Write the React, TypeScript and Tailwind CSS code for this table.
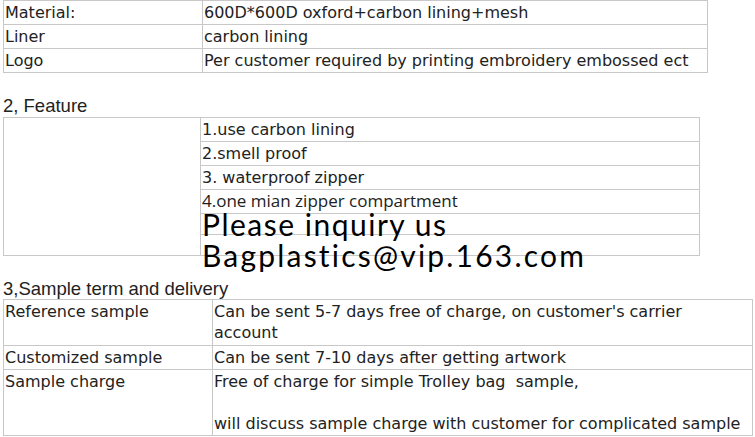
import React from "react";

const verdana = "font-['DejaVu_Sans',Verdana,sans-serif]";

export default function App() {
  const specRows = [
    ["Material:", "600D*600D oxford+carbon lining+mesh"],
    ["Liner", "carbon lining"],
    ["Logo", "Per customer required by printing embroidery embossed ect"],
  ];
  const features = ["1.use carbon lining", "2.smell proof", "3. waterproof zipper"];

  return (
    <div className="w-[755px] h-[437px] overflow-hidden bg-white text-[#222]">
      {/* 1, spec table */}
      <div
        className={`ml-[3px] grid w-[705px] grid-cols-[199px_505px] border-l border-t border-[#c8c8c8] text-[16px] ${verdana}`}
      >
        {specRows.map(([k, v]) => (
          <React.Fragment key={k}>
            <div className="h-[24px] border-b border-r border-[#c8c8c8] pl-[1px] leading-[23px] whitespace-nowrap">
              {k}
            </div>
            <div className="h-[24px] border-b border-r border-[#c8c8c8] pl-[1px] leading-[23px] whitespace-nowrap">
              {v}
            </div>
          </React.Fragment>
        ))}
      </div>

      <div className="h-[44px] pt-[23px] pl-[3px] font-['Liberation_Sans',Arial,sans-serif] text-[18.5px] leading-[20px]">
        2, Feature
      </div>

      {/* 2, feature table */}
      <div
        className={`ml-[3px] grid w-[697px] grid-cols-[197px_499px] grid-rows-[24px_24px_24px_24px_21px_21px] border-l border-t border-[#c8c8c8] text-[16px] ${verdana}`}
      >
        <div className="row-span-6 border-b border-r border-[#c8c8c8]" />
        {features.map((f) => (
          <div
            key={f}
            className="border-b border-r border-[#c8c8c8] pl-[1px] leading-[23px] whitespace-nowrap"
          >
            {f}
          </div>
        ))}
        <div className="border-b border-r border-[#c8c8c8] pl-[1px] font-['Open_Sans',sans-serif] text-[17px] leading-[22px] whitespace-nowrap">
          4.one mian zipper compartment
        </div>
        <div className="relative z-10 h-[21px] overflow-visible border-b border-r border-[#c8c8c8] pl-[1px] font-['Lato',sans-serif] text-[30px] leading-[31px] text-black whitespace-nowrap">
          <div className="-mt-[5px]">
            <span className="tracking-[1.5px]">Please inquiry us</span>
            <br />
            <span className="tracking-[2.2px]">Bagplastics@vip.163.com</span>
          </div>
        </div>
        <div className="border-b border-r border-[#c8c8c8]" />
      </div>

      <div className="h-[43px] pt-[23px] pl-[3px] font-['Liberation_Sans',Arial,sans-serif] text-[18.5px] leading-[20px]">
        3,Sample term and delivery
      </div>

      {/* 3, sample table */}
      <div
        className={`ml-[3px] grid w-[750px] grid-cols-[209px_540px] grid-rows-[46px_24px_66px] border-l border-t border-[#c8c8c8] text-[16px] leading-[21px] ${verdana}`}
      >
        <div className="border-b border-r border-[#c8c8c8] pl-[1px] pt-[1px] whitespace-nowrap">
          Reference sample
        </div>
        <div className="border-b border-r border-[#c8c8c8] pl-[1px] pt-[1px] whitespace-nowrap">
          Can be sent 5-7 days free of charge, on customer's carrier
          <br />
          account
        </div>
        <div className="border-b border-r border-[#c8c8c8] pl-[1px] pt-[1px] whitespace-nowrap">
          Customized sample
        </div>
        <div className="border-b border-r border-[#c8c8c8] pl-[1px] pt-[1px] whitespace-nowrap">
          Can be sent 7-10 days after getting artwork
        </div>
        <div className="border-b border-r border-[#c8c8c8] pl-[1px] pt-[1px] whitespace-nowrap">
          Sample charge
        </div>
        <div className="border-b border-r border-[#c8c8c8] pl-[1px] pt-[1px] whitespace-pre">
          {"Free of charge for simple Trolley bag  sample,"}
          <br />
          <br />
          {"will discuss sample charge with customer for complicated sample"}
        </div>
      </div>
    </div>
  );
}
